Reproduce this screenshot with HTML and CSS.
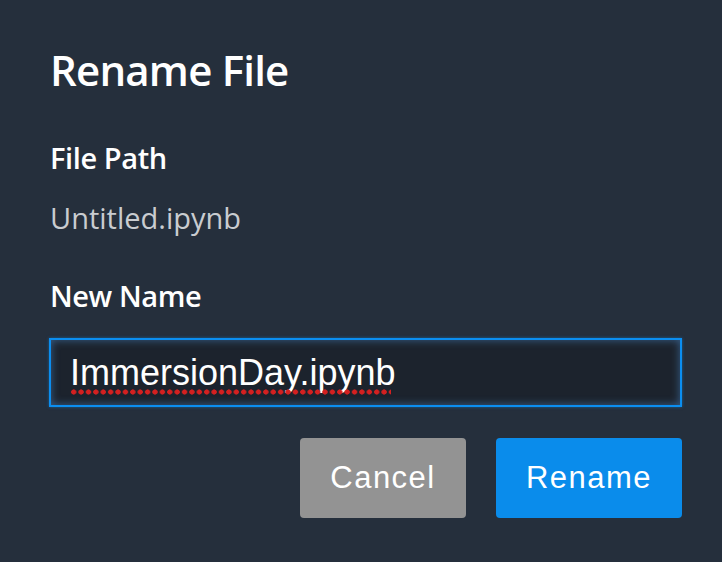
FILE: index.html
```html
<!DOCTYPE html>
<html>
<head>
<meta charset="utf-8">
<link rel="stylesheet" href="styles.css">
</head>
<body>
<div class="dialog">
  <h1 class="title">Rename File</h1>
  <div class="label">File Path</div>
  <div class="path">Untitled.ipynb</div>
  <div class="label label-new">New Name</div>
  <div class="input"><span class="value">ImmersionDay.ipynb</span></div>
  <div class="actions">
    <button class="btn btn-cancel">Cancel</button>
    <button class="btn btn-rename">Rename</button>
  </div>
</div>
</body>
</html>
```
FILE: styles.css
```css
html, body {
  margin: 0;
  padding: 0;
  background: #252f3c;
  height: 100%;
}
.dialog {
  width: 722px;
  height: 562px;
  box-sizing: border-box;
  padding: 45px 40px 0 50px;
  font-family: "Open Sans", sans-serif;
  color: #ffffff;
  display: flex;
  flex-direction: column;
}
.title {
  margin: 0;
  font-size: 42px;
  font-weight: 600;
  letter-spacing: -0.8px;
  line-height: 50px;
}
.label {
  margin-top: 45px;
  font-size: 29px;
  font-weight: 600;
  letter-spacing: -0.4px;
  line-height: 36px;
}
.path {
  margin-top: 24px;
  font-size: 29px;
  color: #c9ccd0;
  line-height: 36px;
}
.label-new {
  margin-top: 42px;
}
.input {
  margin-top: 24px;
  margin-left: -1px;
  width: 633px;
  height: 69px;
  box-sizing: border-box;
  border: 2px solid #0b8ef0;
  background: #1c232d;
  box-shadow: inset 0 0 8px rgba(80, 150, 220, 0.55), 0 0 3px rgba(11, 142, 240, 0.5);
  padding-left: 19px;
  display: flex;
  align-items: center;
  font-family: "Liberation Sans", Arial, sans-serif;
  font-size: 36px;
  color: #ffffff;
}
.value {
  position: relative;
}
.value::after {
  content: "";
  position: absolute;
  left: 0;
  right: 4px;
  bottom: -1px;
  height: 6px;
  background-image: radial-gradient(circle, #d42020 2.3px, transparent 2.9px);
  background-size: 7.4px 6px;
  background-repeat: repeat-x;
}
.actions {
  margin-top: 31px;
  width: 632px;
  display: flex;
  justify-content: flex-end;
  gap: 30px;
}
.btn {
  border: none;
  height: 80px;
  border-radius: 4px;
  font-family: "Liberation Sans", Arial, sans-serif;
  font-size: 31px;
  letter-spacing: 1.5px;
  color: #ffffff;
  padding: 0;
}
.btn-cancel {
  width: 166px;
  background: #939393;
}
.btn-rename {
  width: 186px;
  background: #0a8ceb;
}
```
